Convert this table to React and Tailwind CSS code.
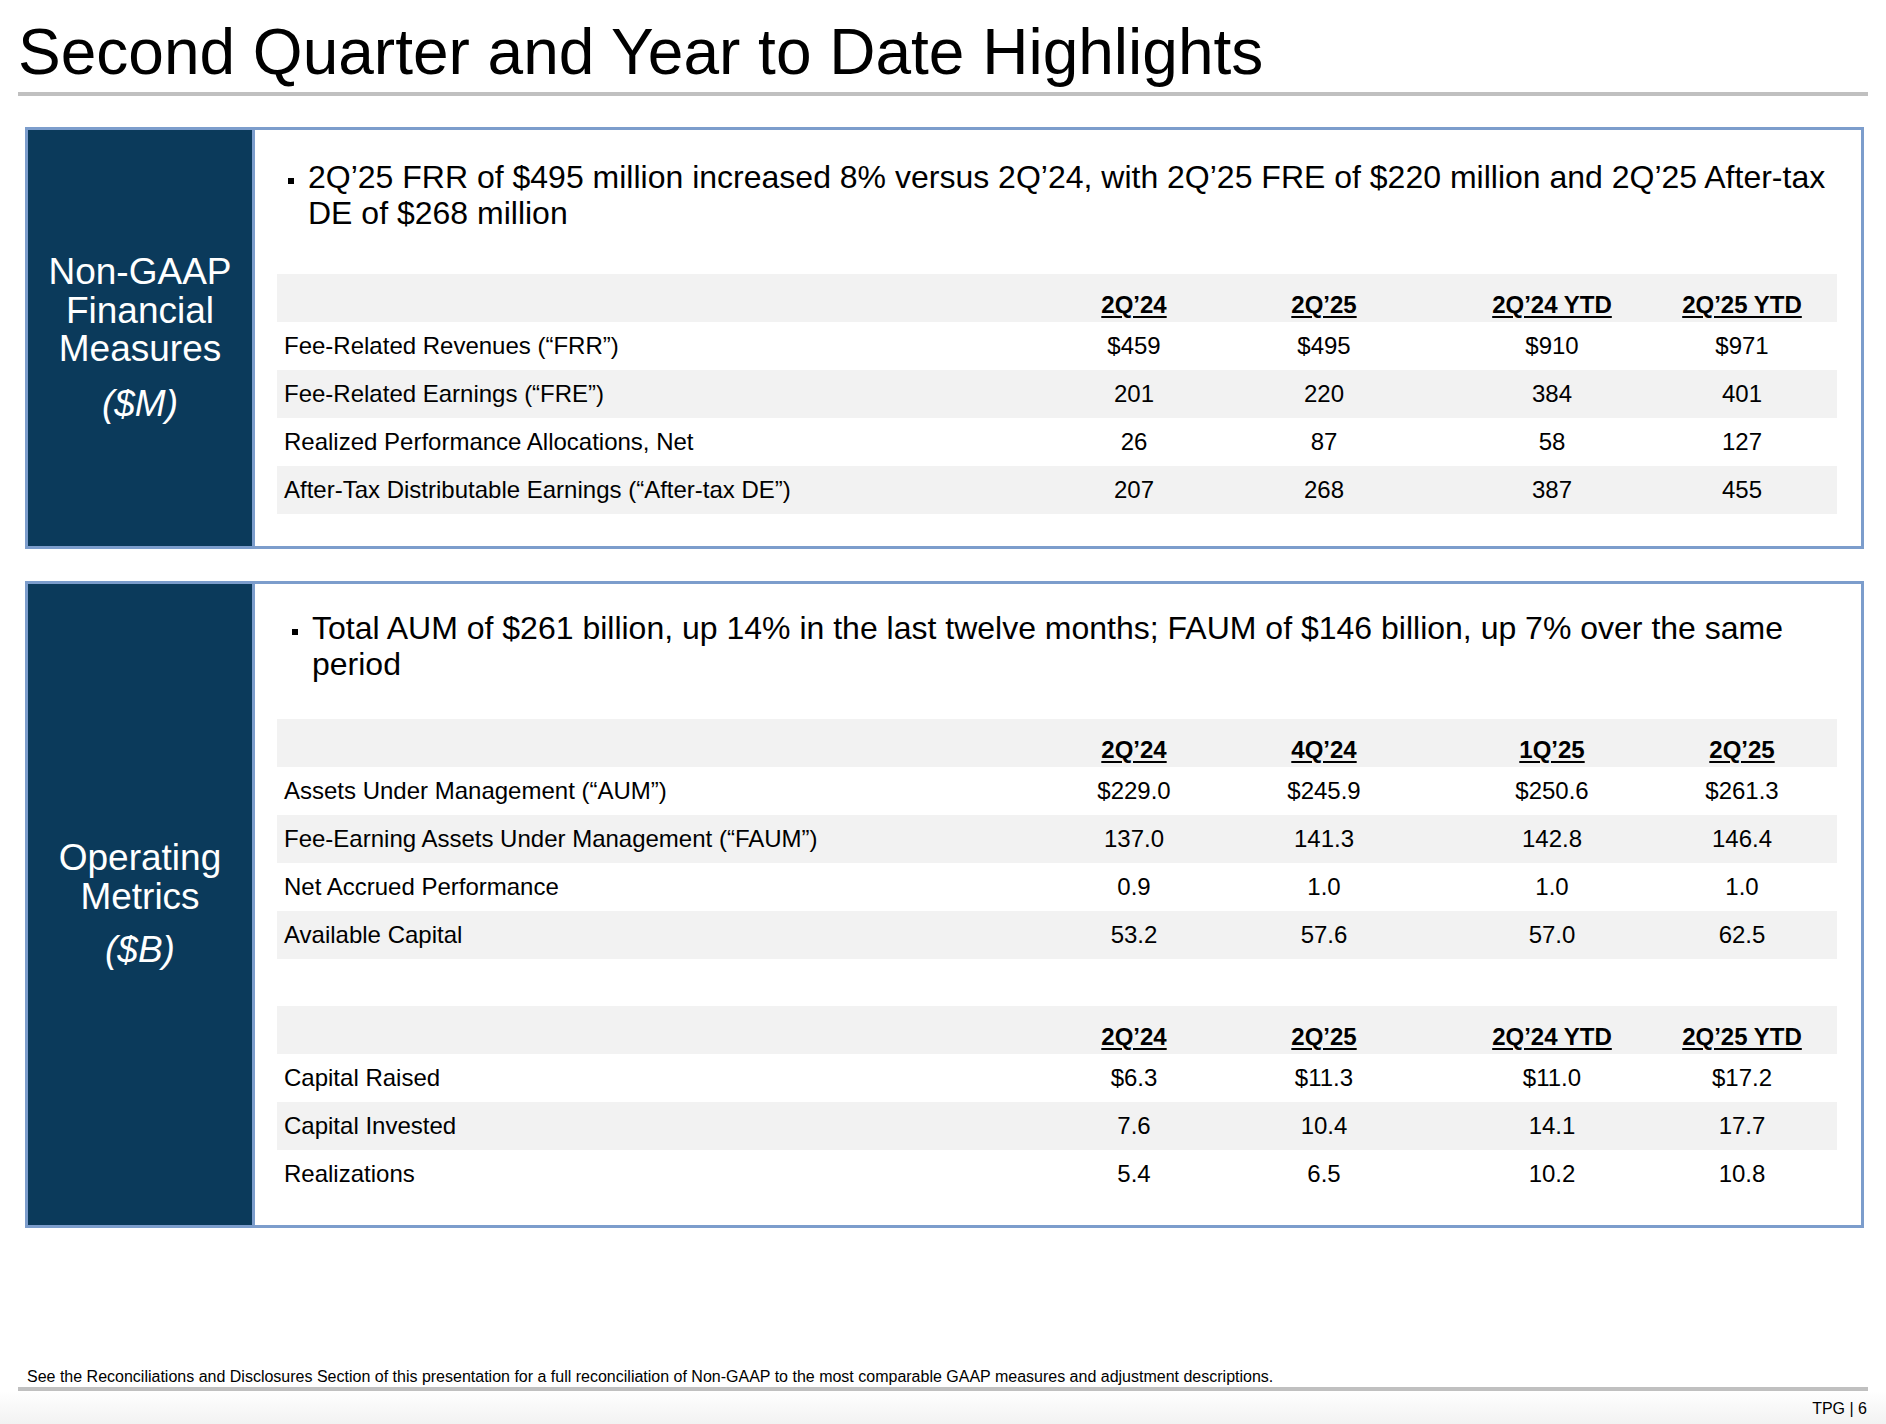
const font = "font-['Liberation_Sans',Arial,sans-serif]";

const finCols = ["2Q’24", "2Q’25", "2Q’24 YTD", "2Q’25 YTD"];
const finRows = [
  ["Fee-Related Revenues (“FRR”)", "$459", "$495", "$910", "$971"],
  ["Fee-Related Earnings (“FRE”)", "201", "220", "384", "401"],
  ["Realized Performance Allocations, Net", "26", "87", "58", "127"],
  ["After-Tax Distributable Earnings (“After-tax DE”)", "207", "268", "387", "455"],
];

const aumCols = ["2Q’24", "4Q’24", "1Q’25", "2Q’25"];
const aumRows = [
  ["Assets Under Management (“AUM”)", "$229.0", "$245.9", "$250.6", "$261.3"],
  ["Fee-Earning Assets Under Management (“FAUM”)", "137.0", "141.3", "142.8", "146.4"],
  ["Net Accrued Performance", "0.9", "1.0", "1.0", "1.0"],
  ["Available Capital", "53.2", "57.6", "57.0", "62.5"],
];

const capRows = [
  ["Capital Raised", "$6.3", "$11.3", "$11.0", "$17.2"],
  ["Capital Invested", "7.6", "10.4", "14.1", "17.7"],
  ["Realizations", "5.4", "6.5", "10.2", "10.8"],
];

// data columns: two of 190, a 38px spacer folded into the third, then 190
const cellClass = [
  "w-[190px] text-center",
  "w-[190px] text-center",
  "w-[228px] pl-[38px] text-center",
  "w-[190px] text-center",
];

function DataTable({ cols, rows, className }) {
  return (
    <div className={`ml-[22px] w-[1560px] text-[24px] text-black ${className}`}>
      <div className="flex h-[48px] items-end bg-[#f2f2f2] pb-[3px] font-bold leading-[28px]">
        <div className="flex-1" />
        {cols.map((c, i) => (
          <div key={i} className={cellClass[i]}>
            <span className="underline underline-offset-[3px]">{c}</span>
          </div>
        ))}
      </div>
      {rows.map((row, r) => (
        <div
          key={r}
          className={`flex h-[48px] items-center leading-[28px] ${r % 2 === 1 ? "bg-[#f2f2f2]" : ""}`}
        >
          <div className="flex-1 pl-[7px]">{row[0]}</div>
          {row.slice(1).map((v, i) => (
            <div key={i} className={cellClass[i]}>
              {v}
            </div>
          ))}
        </div>
      ))}
    </div>
  );
}

function Bullet({ children, className }) {
  return (
    <div className={`flex pr-[16px] text-[32px] leading-[36px] text-black ${className}`}>
      <div className="mt-[19px] h-[6px] w-[6px] shrink-0 bg-black" />
      <div className="ml-[14px]">{children}</div>
    </div>
  );
}

function Panel({ label, unit, height, unitGap, children }) {
  return (
    <div className={`ml-[25px] flex w-[1839px] border-[3px] border-[#7c9dcc] ${height}`}>
      <div className="flex w-[227px] shrink-0 flex-col items-center justify-center border-r-[3px] border-[#7c9dcc] bg-[#0b3a5b] text-center text-[37px] leading-[38.5px] text-white">
        <div>{label}</div>
        <div className={`${unitGap} italic`}>{unit}</div>
      </div>
      <div className="flex-1">{children}</div>
    </div>
  );
}

export default function App() {
  return (
    <div className={`${font} relative h-[1424px] w-[1886px] overflow-hidden bg-white`}>
      <h1 className="pl-[18px] pt-[20px] text-[64px] leading-[64px] font-normal text-black">
        Second Quarter and Year to Date Highlights
      </h1>
      <div className="mx-[18px] mt-[8px] h-[4px] bg-[#c0c0c0]" />

      <div className="mt-[31px]">
        <Panel
          height="h-[422px]"
          unitGap="mt-[16px]"
          label={
            <>
              Non-GAAP
              <br />
              Financial
              <br />
              Measures
            </>
          }
          unit="($M)"
        >
          <Bullet className="ml-[33px] pt-[29px]">
            2Q’25 FRR of $495 million increased 8% versus 2Q’24, with 2Q’25 FRE of $220 million and 2Q’25
            After-tax DE of $268 million
          </Bullet>
          <DataTable cols={finCols} rows={finRows} className="mt-[43px]" />
        </Panel>
      </div>

      <div className="mt-[32px]">
        <Panel
          height="h-[647px]"
          unitGap="mt-[15px]"
          label={
            <>
              Operating
              <br />
              Metrics
            </>
          }
          unit="($B)"
        >
          <Bullet className="ml-[37px] pt-[26px]">
            Total AUM of $261 billion, up 14% in the last twelve months; FAUM of $146 billion, up 7% over the
            same period
          </Bullet>
          <DataTable cols={aumCols} rows={aumRows} className="mt-[37px]" />
          <DataTable cols={finCols} rows={capRows} className="mt-[47px]" />
        </Panel>
      </div>

      <p className="mt-[140px] pl-[27px] text-[16px] leading-[18px] text-black">
        See the Reconciliations and Disclosures Section of this presentation for a full reconciliation of
        Non-GAAP to the most comparable GAAP measures and adjustment descriptions.
      </p>
      <div className="mx-[18px] mt-[1px] h-[4px] bg-[#c0c0c0]" />
      <div className="flex h-[33px] justify-end bg-linear-to-b from-white to-[#f2f2f2] pr-[19px] pt-[9px] text-[16px] leading-[18px] text-black">
        TPG | 6
      </div>
    </div>
  );
}
